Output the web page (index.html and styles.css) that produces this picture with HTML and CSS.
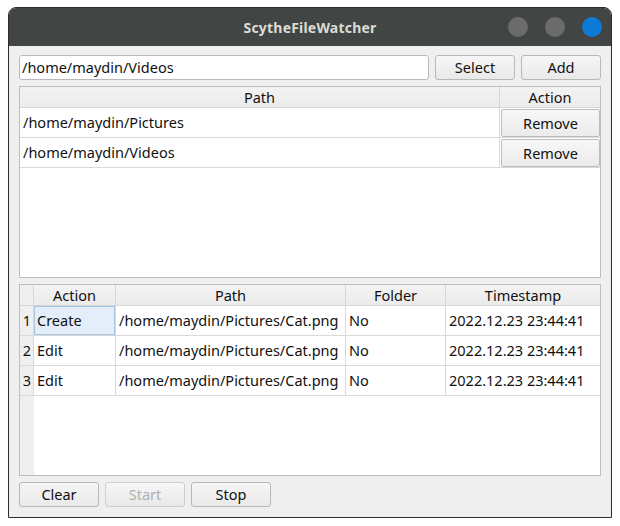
FILE: index.html
```html
<!DOCTYPE html>
<html>
<head>
<meta charset="utf-8">
<link rel="stylesheet" href="styles.css">
</head>
<body>
<div class="window">
  <div class="titlebar">
    <div class="title">ScytheFileWatcher</div>
    <div class="controls">
      <span class="dot"></span><span class="dot"></span><span class="dot blue"></span>
    </div>
  </div>
  <div class="content">
    <div class="toprow">
      <div class="input">/home/maydin/Videos</div>
      <div class="btn w80">Select</div>
      <div class="btn w80">Add</div>
    </div>
    <div class="table t1">
      <div class="hdr">
        <div class="hc c-path">Path</div>
        <div class="hc c-act last">Action</div>
      </div>
      <div class="row">
        <div class="cell c-path">/home/maydin/Pictures</div>
        <div class="cell c-act last"><div class="rbtn">Remove</div></div>
      </div>
      <div class="row">
        <div class="cell c-path">/home/maydin/Videos</div>
        <div class="cell c-act last"><div class="rbtn">Remove</div></div>
      </div>
    </div>
    <div class="table t2">
      <div class="hdr">
        <div class="hc v"></div>
        <div class="hc d-act">Action</div>
        <div class="hc d-path">Path</div>
        <div class="hc d-fold">Folder</div>
        <div class="hc d-ts last">Timestamp</div>
      </div>
      <div class="row">
        <div class="cell v">1</div>
        <div class="cell d-act sel">Create</div>
        <div class="cell d-path">/home/maydin/Pictures/Cat.png</div>
        <div class="cell d-fold">No</div>
        <div class="cell d-ts last">2022.12.23 23:44:41</div>
      </div>
      <div class="row">
        <div class="cell v">2</div>
        <div class="cell d-act">Edit</div>
        <div class="cell d-path">/home/maydin/Pictures/Cat.png</div>
        <div class="cell d-fold">No</div>
        <div class="cell d-ts last">2022.12.23 23:44:41</div>
      </div>
      <div class="row">
        <div class="cell v">3</div>
        <div class="cell d-act">Edit</div>
        <div class="cell d-path">/home/maydin/Pictures/Cat.png</div>
        <div class="cell d-fold">No</div>
        <div class="cell d-ts last">2022.12.23 23:44:41</div>
      </div>
      <div class="filler"><div class="vfill"></div></div>
    </div>
    <div class="bottomrow">
      <div class="btn w80">Clear</div>
      <div class="btn w80 disabled">Start</div>
      <div class="btn w80">Stop</div>
    </div>
  </div>
</div>
</body>
</html>
```

FILE: styles.css
```css
* { box-sizing: border-box; }
html, body { margin: 0; padding: 0; background: #ffffff; }
body {
  font-family: "Noto Sans", "DejaVu Sans", sans-serif;
  font-size: 14px;
  color: #111;
  padding: 7px 0 0 8px;
}
.window {
  width: 604px;
  height: 511px;
  border: 1px solid #2c2c2c;
  border-radius: 8px 8px 0 0;
  background: #efefef;
  display: flex;
  flex-direction: column;
  overflow: hidden;
}
.titlebar {
  height: 38px;
  background: #414645;
  display: flex;
  align-items: center;
  justify-content: center;
  position: relative;
  flex: none;
}
.title {
  color: #dcdcd6;
  font-weight: bold;
  font-size: 14px;
  letter-spacing: 0.2px;
}
.controls {
  position: absolute;
  right: 9px;
  top: 9px;
  display: flex;
  gap: 17px;
}
.dot {
  width: 20px; height: 20px; border-radius: 50%;
  background: #6b6b6b;
}
.dot.blue { background: #0b7bd6; }
.content {
  flex: 1;
  padding: 9px 10px 0 10px;
  display: flex;
  flex-direction: column;
}
.toprow {
  display: flex;
  gap: 6px;
  height: 25px;
}
.input {
  flex: 1;
  background: #fff;
  border: 1px solid #b9b9b9;
  border-radius: 3px;
  padding: 0 2px;
  line-height: 23px;
  font-size: 14.5px;
}
.btn {
  border: 1px solid #b8b8b8;
  border-radius: 3px;
  background: linear-gradient(#f6f6f6, #e9e9e9);
  text-align: center;
  line-height: 23px;
  font-size: 14.5px;
}
.w80 { width: 80px; }
.btn.disabled { color: #b0b0b0; border-color: #cfcfcf; }
.table {
  background: #fff;
  border: 1px solid #bdbdbd;
  display: flex;
  flex-direction: column;
}
.t1 { margin-top: 6px; height: 192px; }
.t2 { margin-top: 6px; height: 192px; }
.hdr {
  display: flex;
  height: 21px;
  background: linear-gradient(#f3f3f3, #ebebeb);
  border-bottom: 1px solid #d6d6d6;
  flex: none;
}
.hc {
  border-right: 1px solid #d6d6d6;
  text-align: center;
  line-height: 20px;
  font-size: 14.5px;
}
.hc.last, .cell.last { border-right: none; }
.row {
  display: flex;
  height: 30px;
  border-bottom: 1px solid #d9d9d9;
  flex: none;
}
.cell {
  border-right: 1px solid #d9d9d9;
  line-height: 29px;
  padding-left: 3px;
  font-size: 14.5px;
  white-space: nowrap;
  overflow: hidden;
}
.c-path { width: 480px; }
.c-act { flex: 1; }
.t1 .cell.c-act { padding: 1px 0 1px 1px; }
.rbtn {
  height: 28px;
  border: 1px solid #bdbdbd;
  border-radius: 2px;
  background: linear-gradient(#f7f7f7, #ebebeb);
  text-align: center;
  line-height: 26px;
  font-size: 14.5px;
}
.v { width: 14px; padding-left: 0; text-align: center; background: #efefef; }
.cell.v { padding-left: 1px; }
.d-act { width: 82px; }
.d-path { width: 230px; }
.d-fold { width: 100px; }
.d-ts { flex: 1; }
.sel {
  background: #e3eefa;
  box-shadow: inset 0 0 0 1px #a6c6e4;
}
.filler { flex: 1; display: flex; }
.vfill { width: 14px; background: #efefef; }
.bottomrow {
  display: flex;
  gap: 6px;
  margin-top: 6px;
  height: 25px;
}
```
